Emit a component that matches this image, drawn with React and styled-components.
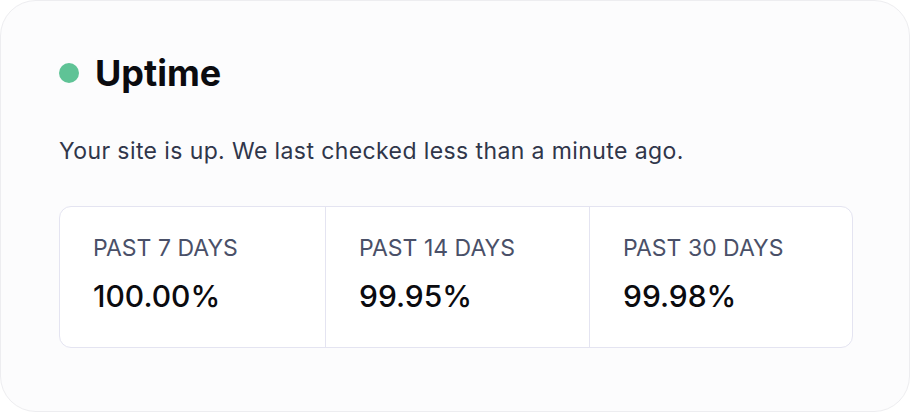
import React from "react";
import styled, { createGlobalStyle } from "styled-components";

const Global = createGlobalStyle`
  html, body { margin: 0; padding: 0; background: #ffffff; }
  body { font-family: Inter, "Noto Sans", sans-serif; -webkit-font-smoothing: antialiased; }
`;

const Card = styled.div`
  box-sizing: border-box;
  width: 910px;
  height: 412px;
  background: #fcfcfd;
  border: 1px solid #ededf0;
  border-radius: 36px;
  padding: 50px 58px 0 58px;
`;

const Header = styled.div`
  display: flex;
  align-items: center;
  gap: 16px;
`;

const Dot = styled.span`
  width: 20px;
  height: 20px;
  border-radius: 50%;
  background: ${(p) => p.$color};
  flex: none;
`;

const Title = styled.h1`
  margin: 0;
  font-size: 36px;
  line-height: 44px;
  font-weight: 700;
  color: #0b0b0f;
`;

const Subtitle = styled.p`
  margin: 41px 0 0 0;
  font-size: 23px;
  line-height: 30px;
  letter-spacing: 0.4px;
  color: #30364a;
`;

const Stats = styled.div`
  margin-top: 40px;
  width: 794px;
  box-sizing: border-box;
  display: grid;
  grid-template-columns: 265px 264px 1fr;
  border: 1.5px solid #e4e4f1;
  border-radius: 12px;
  background: #fff;
`;

const Stat = styled.div`
  padding: 26px 0 33px 33px;
  border-left: ${(p) => (p.$first ? "none" : "1.5px solid #e4e4f1")};
`;

const Label = styled.div`
  font-size: 23px;
  line-height: 30px;
  color: #4a5068;
  text-transform: uppercase;
`;

const Value = styled.div`
  margin-top: 15px;
  font-size: 30px;
  line-height: 36px;
  font-weight: 500;
  color: #0b0b0f;
`;

const stats = [
  { label: "Past 7 days", value: "100.00%" },
  { label: "Past 14 days", value: "99.95%" },
  { label: "Past 30 days", value: "99.98%" },
];

export default function App() {
  return (
    <>
      <Global />
      <Card>
        <Header>
          <Dot $color="#5fc396" />
          <Title>Uptime</Title>
        </Header>
        <Subtitle>Your site is up. We last checked less than a minute ago.</Subtitle>
        <Stats>
          {stats.map((s, i) => (
            <Stat key={s.label} $first={i === 0}>
              <Label>{s.label}</Label>
              <Value>{s.value}</Value>
            </Stat>
          ))}
        </Stats>
      </Card>
    </>
  );
}
